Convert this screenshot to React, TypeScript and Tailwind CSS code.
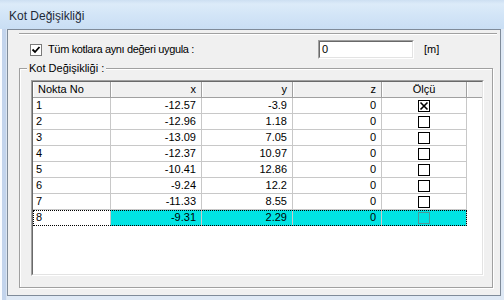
import React from "react";

type Row = { n: number; x: string; y: string; z: string; checked: boolean };

const rows: Row[] = [
  { n: 1, x: "-12.57", y: "-3.9", z: "0", checked: true },
  { n: 2, x: "-12.96", y: "1.18", z: "0", checked: false },
  { n: 3, x: "-13.09", y: "7.05", z: "0", checked: false },
  { n: 4, x: "-12.37", y: "10.97", z: "0", checked: false },
  { n: 5, x: "-10.41", y: "12.86", z: "0", checked: false },
  { n: 6, x: "-9.24", y: "12.2", z: "0", checked: false },
  { n: 7, x: "-11.33", y: "8.55", z: "0", checked: false },
  { n: 8, x: "-9.31", y: "2.29", z: "0", checked: false },
];

function CellBox({ checked, selected }: { checked: boolean; selected?: boolean }) {
  return (
    <svg width="12" height="12" viewBox="0 0 12 12">
      <rect
        x="0.5"
        y="0.5"
        width="11"
        height="11"
        fill="none"
        stroke={selected ? "#4b9a9a" : "#000"}
      />
      {checked && (
        <path d="M2.5 2.5 L9.5 9.5 M9.5 2.5 L2.5 9.5" stroke="#000" strokeWidth="1.6" />
      )}
    </svg>
  );
}

function HeaderCell({
  label,
  className,
}: {
  label: string;
  className: string;
}) {
  return (
    <div
      className={`h-full border-r border-[#a0a0a0] bg-[#f0f0f0] leading-[15px] shadow-[inset_1px_0_0_#fff] ${className}`}
    >
      {label}
    </div>
  );
}

export default function App() {
  return (
    <div className="flex h-[300px] w-[504px] flex-col overflow-hidden bg-[#dfe9f5] text-[11px] text-black [font-family:'Liberation_Sans',Arial,sans-serif]">
      {/* title bar */}
      <div className="flex h-[29px] shrink-0 items-center bg-[linear-gradient(to_bottom,#cddff2_0,#dcebf9_4px,#d3e5f7_50%,#c9def4_100%)] pl-[9px] pt-[2px] text-[12px] text-[#1e2a38]">
        Kot Değişikliği
      </div>

      <div className="flex flex-1">
        <div className="w-[7px] bg-[linear-gradient(to_right,#fafcff_0,#fafcff_2px,#c3d4ec_2px,#c3d4ec_6px,#dbe5f2_6px)]" />
        <div className="mb-[4px] mr-[3px] flex flex-1 flex-col border border-[#7f8b99] bg-[#f0f0f0] pl-[11px] pr-[3px] pt-[3px]">
          {/* panel */}
          <div className="flex flex-1 flex-col border-t border-[#a0a0a0] shadow-[inset_0_1px_0_#fff]">
            <div className="mt-[6px] flex h-[19px] items-center">
              <div className="flex w-[299px] items-center pl-[11px]">
                <div className="flex h-[12px] w-[12px] items-center justify-center border border-[#7a7a7a] bg-white">
                  <svg width="10" height="10" viewBox="0 0 10 10">
                    <path d="M1.5 4.5 L4 7 L8.5 2" fill="none" stroke="#000" strokeWidth="1.8" />
                  </svg>
                </div>
                <span className="ml-[6px] tracking-[-0.35px]">Tüm kotlara aynı değeri uygula :</span>
              </div>
              <div className="h-[19px] w-[96px] border border-t-[#a0a0a0] border-l-[#a0a0a0] border-r-white border-b-white">
                <div className="h-full w-full border border-t-[#696969] border-l-[#696969] border-r-[#e3e3e3] border-b-[#e3e3e3] bg-white pl-[2px] leading-[15px]">
                  0
                </div>
              </div>
              <span className="ml-[10px]">[m]</span>
            </div>

            {/* group box */}
            <fieldset className="mr-[4px] mt-[3px] h-[226px] border border-[#a0a0a0] pl-[11px] pr-[6px] shadow-[inset_1px_1px_0_#fff,1px_1px_0_#fff]">
              <legend className="-ml-[4px] bg-[#f0f0f0] px-[2px] leading-[13px]">
                Kot Değişikliği :
              </legend>
              <div className="mt-[5px] h-[196px] w-[453px] border border-t-[#a0a0a0] border-l-[#a0a0a0] border-r-white border-b-white">
                <div className="h-full w-full border border-t-[#696969] border-l-[#696969] border-r-[#e3e3e3] border-b-[#e3e3e3] bg-white">
                  <div className="flex h-[16px] border-b border-[#a0a0a0]">
                    <HeaderCell label="Nokta No" className="w-[78px] pl-[5px]" />
                    <HeaderCell label="x" className="w-[91px] pr-[5px] text-right" />
                    <HeaderCell label="y" className="w-[91px] pr-[5px] text-right" />
                    <HeaderCell label="z" className="w-[89px] pr-[5px] text-right" />
                    <HeaderCell label="Ölçü" className="w-[85px] text-center" />
                    <div className="h-full flex-1 bg-[#f0f0f0] shadow-[inset_1px_0_0_#fff]" />
                  </div>
                  {rows.map((r) => {
                    const sel = r.n === 8;
                    const dataBg = sel ? "bg-[#00e3e3]" : "bg-white";
                    return (
                      <div
                        key={r.n}
                        className={`flex h-[16px] w-[434px] ${sel ? "outline outline-1 outline-dotted outline-black -outline-offset-1" : "border-b border-[#c8c8c8]"}`}
                      >
                        <div className="w-[78px] border-r border-[#c8c8c8] pl-[3px] leading-[15px]">
                          {r.n}
                        </div>
                        <div className={`w-[91px] border-r border-[#c8c8c8] pr-[5px] text-right leading-[15px] ${dataBg}`}>
                          {r.x}
                        </div>
                        <div className={`w-[91px] border-r border-[#c8c8c8] pr-[5px] text-right leading-[15px] ${dataBg}`}>
                          {r.y}
                        </div>
                        <div className={`w-[89px] border-r border-[#c8c8c8] pr-[5px] text-right leading-[15px] ${dataBg}`}>
                          {r.z}
                        </div>
                        <div className={`flex w-[85px] items-center justify-center border-r border-[#c8c8c8] ${dataBg}`}>
                          <CellBox checked={r.checked} selected={sel} />
                        </div>
                      </div>
                    );
                  })}
                </div>
              </div>
            </fieldset>
          </div>
        </div>
      </div>
    </div>
  );
}
